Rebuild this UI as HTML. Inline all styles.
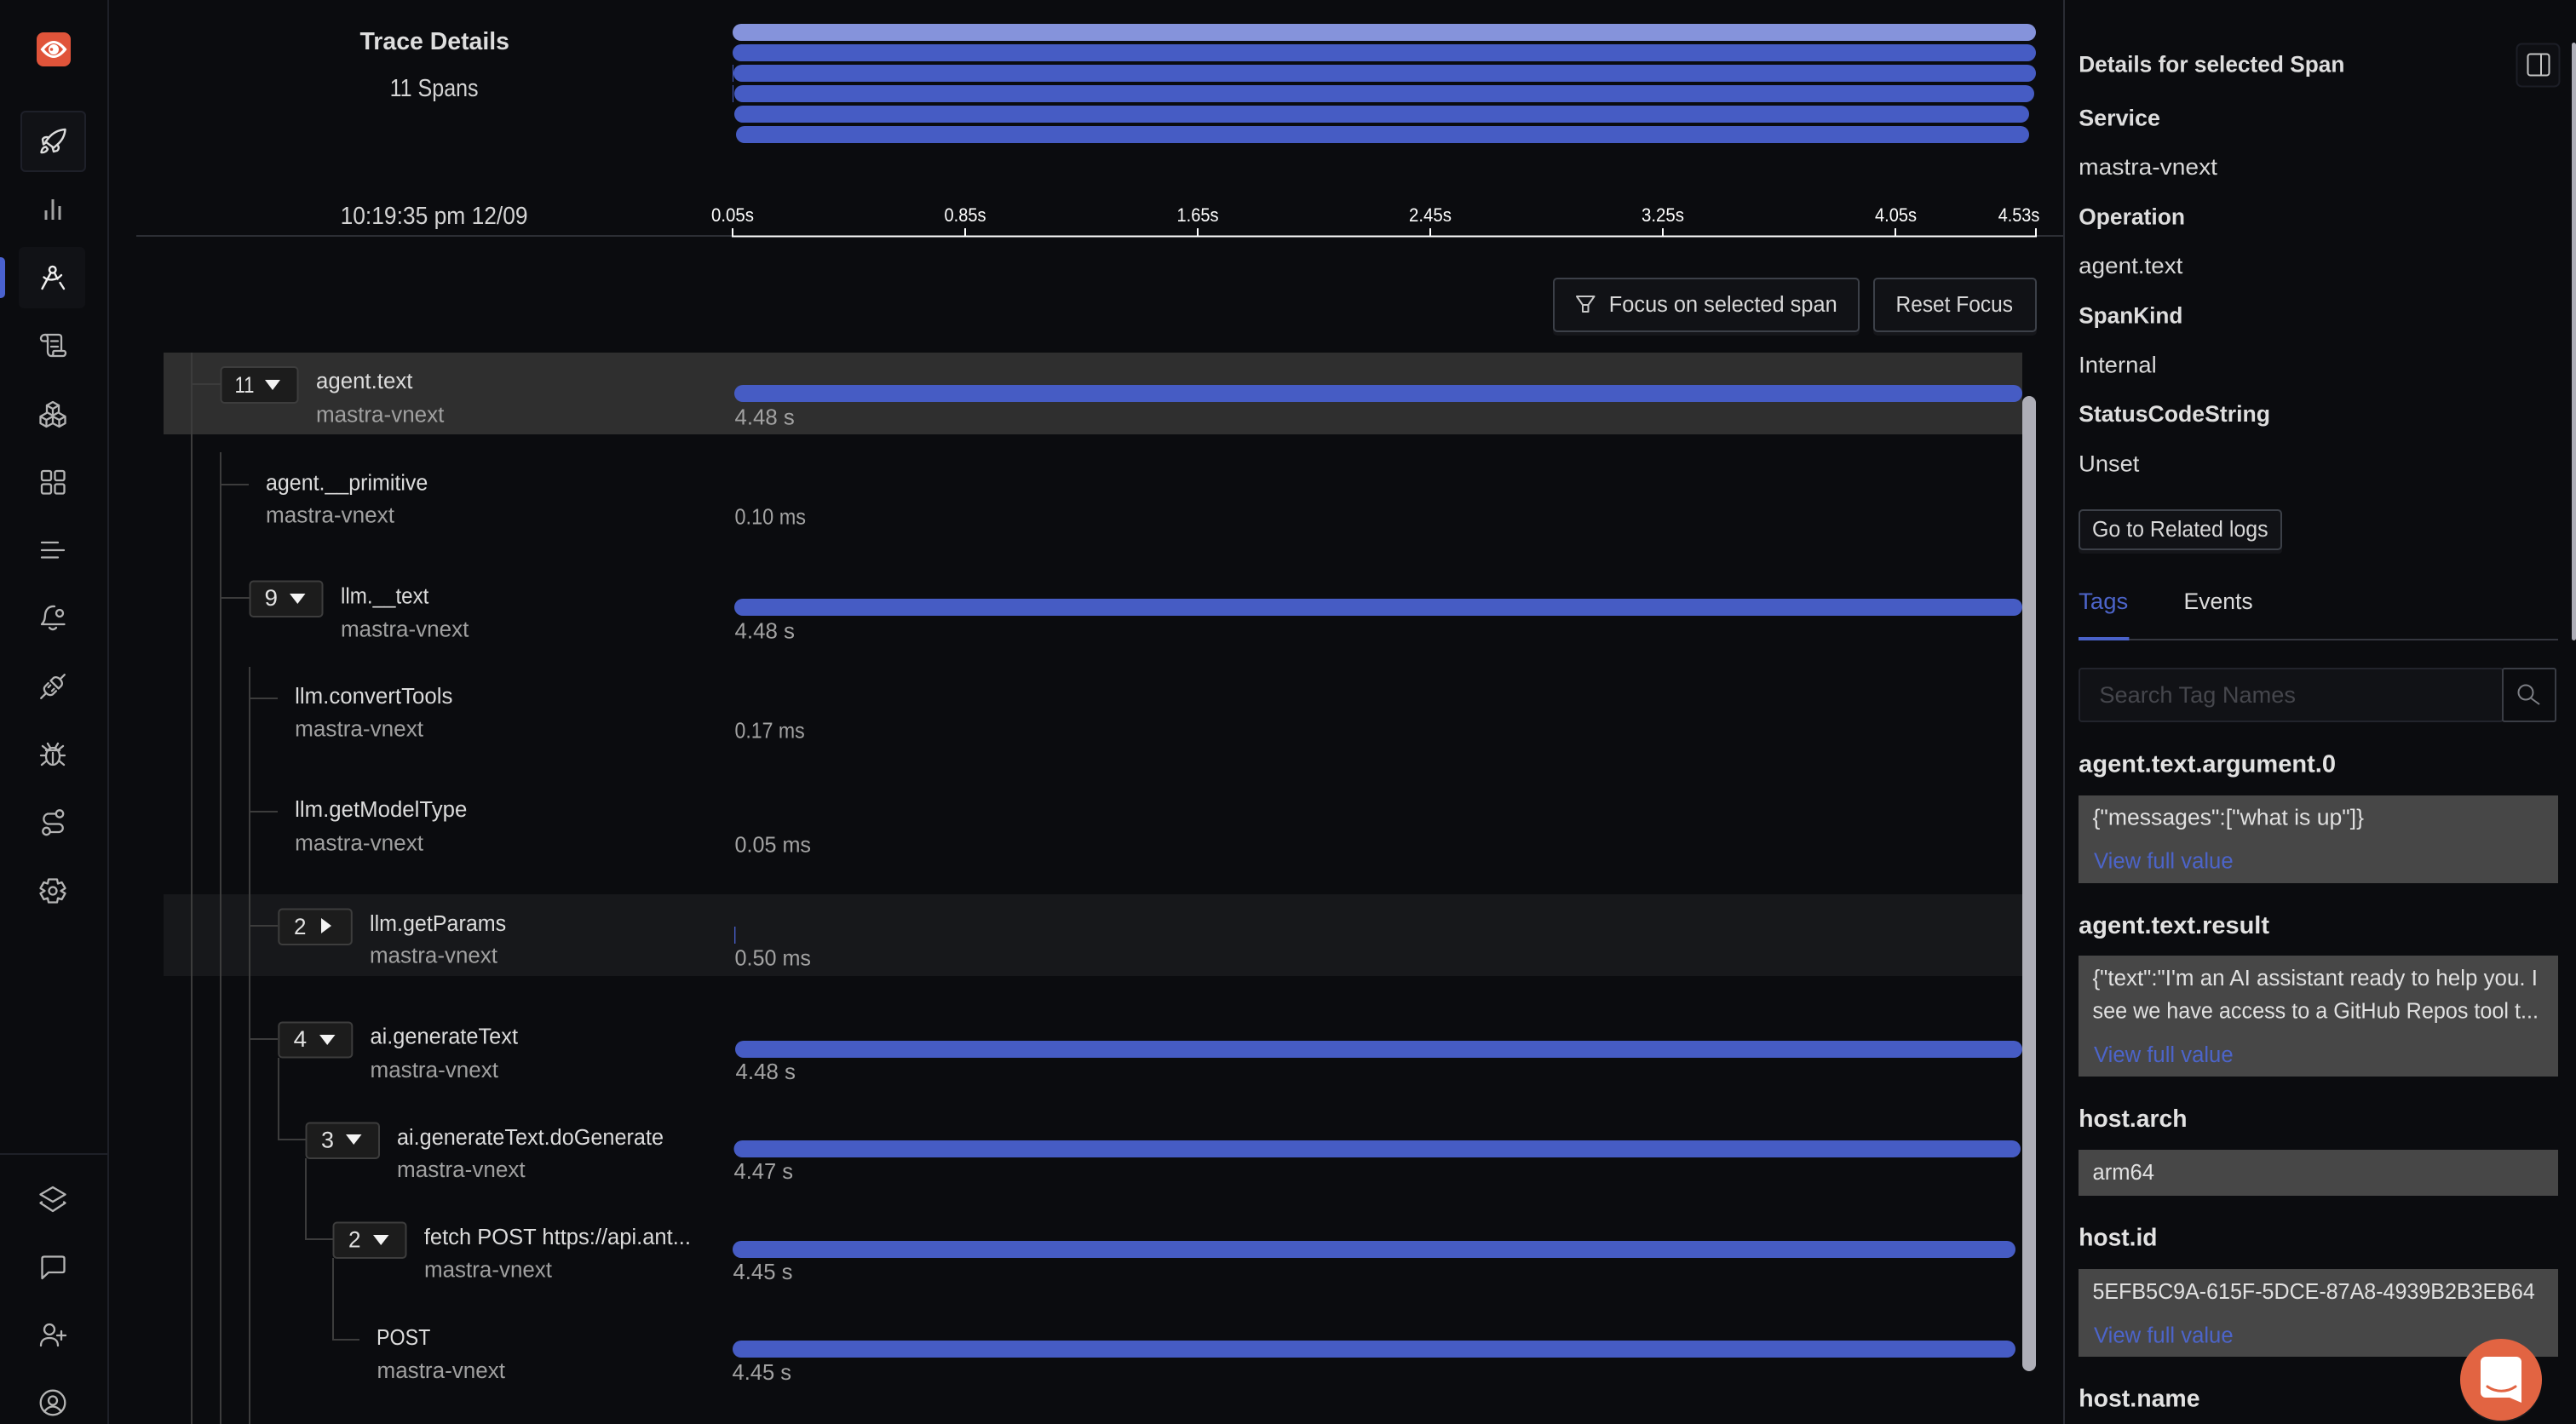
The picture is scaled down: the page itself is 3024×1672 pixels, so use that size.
<!DOCTYPE html>
<html lang="en">
<head>
<meta charset="utf-8">
<title>Trace Details</title>
<style>
html,body{margin:0;padding:0;background:#0b0c0f;width:3024px;height:1672px;overflow:hidden}
svg{display:block}
text{font-family:"Liberation Sans",Arial,sans-serif;white-space:pre}
.t{font-size:29px;font-weight:700;fill:#dedede}
.s{font-size:28.5px;fill:#d4d4d4}
.a{font-size:22px;fill:#fff}
.b{font-size:25.5px;fill:#d8d8d8}
.n{font-size:25.5px;fill:#dcdcdc}
.m{font-size:25.5px;fill:#a0a0a0}
.d{font-size:26px;fill:#a2a2a2}
.c{font-size:27px;fill:#e2e2e2}
.h{font-size:27px;font-weight:700;fill:#dedede}
.v{font-size:27px;fill:#d8d8d8}
.k{font-size:28.5px;font-weight:700;fill:#e2e2e2}
.w{font-size:25.5px;fill:#e0e0e0}
.l{font-size:25.5px;fill:#4c64c9}
.i{fill:none;stroke:#b4b4b4;stroke-width:2.3;stroke-linecap:round;stroke-linejoin:round}
.iw{fill:none;stroke:#f0f0f0;stroke-width:2.4;stroke-linecap:round;stroke-linejoin:round}
.tl{fill:#3c3c3c}
.tg{fill:#1c1c1c;stroke:#3d3d3d;stroke-width:2}
.bar{fill:#465cc4}
</style>
</head>
<body>
<svg xmlns="http://www.w3.org/2000/svg" width="3024" height="1672" viewBox="0 0 3024 1672">
<rect width="3024" height="1672" fill="#0b0c0f"/>

<!-- left rail -->
<rect x="126" y="0" width="2" height="1672" fill="#1e2028"/>
<rect x="0" y="1354" width="126" height="2" fill="#1e2028"/>
<rect x="43" y="38" width="40" height="40" rx="8" fill="#e0543a"/>
<path d="M47.5 58C53 51 58 48 63 48C68 48 73 51 78.5 58C73 65 68 68 63 68C58 68 53 65 47.5 58Z" fill="#fff"/>
<path d="M52 58C56 53 60 51 63 51C66 51 70 53 74 58C70 63 66 65 63 65C60 65 56 63 52 58Z" fill="#e0543a"/>
<circle cx="63" cy="58" r="6" fill="#fff"/>
<circle cx="60.5" cy="58" r="1.8" fill="#e0543a"/>

<rect x="25" y="131" width="75" height="70" rx="5" fill="#111216" stroke="#1e2029" stroke-width="2"/>
<rect x="22" y="290" width="78" height="72" rx="6" fill="#111216"/>
<path d="M0 302H1A5 5 0 0 1 6 307V345A5 5 0 0 1 1 350H0Z" fill="#4a62cf"/>

<g class="iw" transform="translate(30 140)" style="stroke:#dcdcdc">
<path d="M46.5 12C38.5 12.5 32 16 27 22L23.5 26.5L33 33.5L37 30C43 25 46 19 46.5 12Z"/>
<path d="M27 21.5C24.5 20.5 21.5 21 20 23.5L21 29.5L24.5 27"/>
<path d="M37 30C39.5 32 39.5 35 37 37L33 38L31.5 32.5"/>
<path d="M24 32.5C21 32.5 19 35 18.5 39C22 39.5 25 37.5 26 35Z"/>
</g>
<path d="M54 247V258M62 234V258M70 242V258" fill="none" stroke="#a2a2a2" stroke-width="3"/>
<g class="iw">
<circle cx="61.7" cy="316.7" r="3.8"/>
<path d="M59.5 320.5L49.5 339"/>
<path d="M64 320.5L67.5 327.5M70.5 332L75 339"/>
<path d="M51.5 325.5C56 329.5 66 330 72 323"/>
</g>
<g class="i">
<path d="M53 393H69C71 393 72 394.5 72 396V411.5"/>
<path d="M53 393C50 393 48 395 48 397.5C48 399.5 49.5 400.5 51 400.5H56"/>
<path d="M53 393C55.5 393 56 395 56 398V413C56 416 58 418 60 418H74C76 418 77 416 77 414.5C77 413 76 412 75 412H64C62.5 412 62 413.5 62.5 415C62.5 416.5 61.5 418 60 418"/>
<path d="M60 400.5H68M60 407H68"/>

<path d="M62 472L69 476V484L62 488L55 484V476Z"/>
<path d="M55 476L62 480L69 476M62 480V488"/>
<path d="M54.5 485L47.5 489V497L54.5 501L62 497V489M47.5 489L54.5 493L62 489M54.5 493V501"/>
<path d="M69.5 485L76.5 489V497L69.5 501L62 497M76.5 489L69.5 493L62 489M69.5 493V501"/>

<rect x="49" y="553" width="11" height="11" rx="2"/>
<rect x="64.5" y="553" width="11" height="11" rx="2"/>
<rect x="49" y="568.5" width="11" height="11" rx="2"/>
<rect x="64.5" y="568.5" width="11" height="11" rx="2"/>

<path d="M49 637H68M49 646H75M49 654.5H68"/>

<circle cx="70" cy="720" r="4"/>
<path d="M64 712C57 711.5 53.5 716 53 722C52.7 727 52 730 49 733H75.5M58 737Q62 741 66 737"/>

<g transform="translate(62 806) rotate(-45)">
<path d="M3 -6.5H7C10.5 -6.5 12 -3 12 0C12 3 10.5 6.5 7 6.5H3Z"/>
<path d="M12 0H19.5"/>
<path d="M-1 -6.5H-6C-9.5 -6.5 -11 -3 -11 0C-11 3 -9.5 6.5 -6 6.5H-1"/>
<path d="M-11 0H-19.5M-1 -3H-4.5M-1 3H-4.5"/>
</g>

<ellipse cx="62" cy="888" rx="8" ry="10"/>
<path d="M62 884V896M54 881H70M56 873L59 878M68 873L65 878M48 887H54M70 887H76M49 898L55 893M75 898L69 893M50 876L55 880M74 876L69 880"/>

<circle cx="70" cy="955.5" r="4.2"/>
<circle cx="54.5" cy="976" r="4.2"/>
<path d="M66 955.5H56A6.2 6.2 0 0 0 56 967.5H69A4.4 4.4 0 0 1 69 977H59"/>

<polygon transform="translate(62 1046)" points="-5,-13.5 5,-13.5 6,-8.5 10.5,-10 14.5,-3 9.5,0 14.5,3 10.5,10 6,8.5 5,13.5 -5,13.5 -6,8.5 -10.5,10 -14.5,3 -9.5,0 -14.5,-3 -10.5,-10 -6,-8.5"/>
<circle cx="62" cy="1046" r="4.5"/>

<path d="M62 1394L76.5 1402.5L62 1411L47.5 1402.5Z"/>
<path d="M49 1411.5L47.5 1412.5L62 1422L76.5 1412.5L75 1411.5"/>

<path d="M49.5 1501V1477.5C49.5 1476 50.5 1475.5 52 1475.5H73C74.5 1475.5 75.5 1476 75.5 1477.5V1492C75.5 1493.5 74.5 1494 73 1494H57Z"/>

<circle cx="58" cy="1561" r="6"/>
<path d="M48 1580C48 1574 52 1571 58 1571C64 1571 68 1574 68 1580M67 1568H77M72 1563V1573"/>

<circle cx="62" cy="1647" r="14.3"/>
<circle cx="62" cy="1644.5" r="5"/>
<path d="M52 1657.5C55 1653.5 58 1651.5 62 1651.5C66 1651.5 69 1653.5 72 1657.5"/>
</g>

<!-- header -->
<text class="t" x="422.5" y="58" textLength="175.5" lengthAdjust="spacingAndGlyphs">Trace Details</text>
<text class="s" x="457.6" y="113" textLength="104" lengthAdjust="spacingAndGlyphs">11 Spans</text>
<text class="s" x="399.6" y="263" textLength="220" lengthAdjust="spacingAndGlyphs">10:19:35 pm 12/09</text>

<rect x="860" y="28" width="1530" height="20" rx="10" fill="#8593db"/>
<rect x="860" y="52" width="1530" height="20" rx="10" class="bar"/>
<rect x="861" y="76" width="1529" height="20" rx="10" class="bar"/>
<rect x="862" y="100" width="1526" height="20" rx="10" class="bar"/>
<rect x="862" y="124" width="1520" height="20" rx="10" class="bar"/>
<rect x="864" y="148" width="1518" height="20" rx="10" class="bar"/>
<rect x="860" y="76" width="1" height="20" class="bar"/>
<rect x="860" y="100" width="1" height="20" class="bar"/>

<rect x="160" y="276" width="700" height="2" fill="#2c2e34"/>
<rect x="2390" y="276" width="32" height="2" fill="#2c2e34"/>
<rect x="2422" y="0" width="2" height="1672" fill="#2a2c34"/>
<rect x="859" y="276.5" width="1532" height="2" fill="#fff"/>
<path d="M860 268V278M1133 268V278M1406 268V278M1679 268V278M1952 268V278M2225 268V278M2390 268V278" stroke="#fff" stroke-width="2" fill="none"/>
<text class="a" x="835" y="260" textLength="50" lengthAdjust="spacingAndGlyphs">0.05s</text>
<text class="a" x="1108.5" y="260" textLength="49" lengthAdjust="spacingAndGlyphs">0.85s</text>
<text class="a" x="1381.5" y="260" textLength="49" lengthAdjust="spacingAndGlyphs">1.65s</text>
<text class="a" x="1654" y="260" textLength="50" lengthAdjust="spacingAndGlyphs">2.45s</text>
<text class="a" x="1927" y="260" textLength="50" lengthAdjust="spacingAndGlyphs">3.25s</text>
<text class="a" x="2201" y="260" textLength="49" lengthAdjust="spacingAndGlyphs">4.05s</text>
<text class="a" x="2345.7" y="260" textLength="48.6" lengthAdjust="spacingAndGlyphs">4.53s</text>

<!-- buttons -->
<rect x="1823" y="330" width="360" height="64" rx="5" fill="#15161a"/>
<rect x="2199" y="330" width="192" height="64" rx="5" fill="#15161a"/>
<rect x="1824" y="327" width="358" height="62" rx="4" fill="#111216" stroke="#3c4048" stroke-width="2"/>
<rect x="2200" y="327" width="190" height="62" rx="4" fill="#111216" stroke="#3c4048" stroke-width="2"/>
<path d="M1851 348H1871.5L1864.5 358V366H1858V358ZM1858 358H1864.5" fill="none" stroke="#c8c8c8" stroke-width="2" stroke-linejoin="round"/>
<text class="b" x="1888.8" y="366" textLength="267.9" lengthAdjust="spacingAndGlyphs">Focus on selected span</text>
<text class="b" x="2225.5" y="366" textLength="137.5" lengthAdjust="spacingAndGlyphs">Reset Focus</text>

<!-- rows backgrounds -->
<rect x="192" y="414" width="2182" height="96" fill="#2f2f2f"/>
<rect x="192" y="1050" width="2182" height="96" fill="#17181b"/>
<rect x="2374" y="465" width="16" height="1145" rx="8" fill="#aeaeb7"/>

<!-- tree lines -->
<rect class="tl" x="224" y="414" width="2" height="1258"/>
<rect class="tl" x="225" y="450" width="34" height="2"/>
<rect class="tl" x="258" y="531" width="2" height="1141"/>
<rect class="tl" x="259" y="568" width="33" height="2"/>
<rect class="tl" x="259" y="701" width="34" height="2"/>
<rect class="tl" x="292" y="783" width="2" height="889"/>
<rect class="tl" x="293" y="819" width="33" height="2"/>
<rect class="tl" x="293" y="952" width="33" height="2"/>
<rect class="tl" x="293" y="1086" width="33" height="2"/>
<rect class="tl" x="293" y="1219" width="33" height="2"/>
<rect class="tl" x="326" y="1242" width="2" height="97"/>
<rect class="tl" x="326" y="1337" width="33" height="2"/>
<rect class="tl" x="358" y="1360" width="2" height="96"/>
<rect class="tl" x="358" y="1454" width="33" height="2"/>
<rect class="tl" x="390" y="1477" width="2" height="97"/>
<rect class="tl" x="390" y="1572" width="32" height="2"/>

<!-- toggles -->
<rect class="tg" x="259.5" y="431" width="90" height="42" rx="4"/>
<text class="c" x="275.5" y="461" textLength="23" lengthAdjust="spacingAndGlyphs">11</text>
<path d="M311 446H329L320 458Z" fill="#f4f4f4"/>

<rect class="tg" x="293.5" y="682.5" width="85" height="41.5" rx="4"/>
<text class="c" x="310.5" y="711" textLength="15.5" lengthAdjust="spacingAndGlyphs">9</text>
<path d="M340 697H358.5L349.3 709Z" fill="#f4f4f4"/>

<rect class="tg" x="327.3" y="1067.5" width="85.5" height="41.5" rx="4"/>
<text class="c" x="345" y="1097" textLength="14.5" lengthAdjust="spacingAndGlyphs">2</text>
<path d="M377 1078V1096L389 1087Z" fill="#f4f4f4"/>

<rect class="tg" x="327.3" y="1200.5" width="86" height="41" rx="4"/>
<text class="c" x="344.7" y="1229" textLength="15.5" lengthAdjust="spacingAndGlyphs">4</text>
<path d="M375 1215H393.5L384.2 1227Z" fill="#f4f4f4"/>

<rect class="tg" x="359.5" y="1318.5" width="85.5" height="41.5" rx="4"/>
<text class="c" x="377" y="1347.5" textLength="15" lengthAdjust="spacingAndGlyphs">3</text>
<path d="M406 1332H424.5L415.2 1344Z" fill="#f4f4f4"/>

<rect class="tg" x="391.5" y="1435.5" width="85" height="41.5" rx="4"/>
<text class="c" x="409" y="1464.5" textLength="14.5" lengthAdjust="spacingAndGlyphs">2</text>
<path d="M438 1450H456.5L447.2 1462Z" fill="#f4f4f4"/>

<!-- names -->
<text class="n" x="371" y="456" textLength="113.4" lengthAdjust="spacingAndGlyphs">agent.text</text>
<text class="m" x="371" y="495.7" textLength="150.4" lengthAdjust="spacingAndGlyphs">mastra-vnext</text>
<text class="n" x="312" y="575.5" textLength="190.3" lengthAdjust="spacingAndGlyphs">agent.__primitive</text>
<text class="m" x="312" y="613.4" textLength="151" lengthAdjust="spacingAndGlyphs">mastra-vnext</text>
<text class="n" x="400" y="708.3" textLength="103.4" lengthAdjust="spacingAndGlyphs">llm.__text</text>
<text class="m" x="400" y="747.7" textLength="150.3" lengthAdjust="spacingAndGlyphs">mastra-vnext</text>
<text class="n" x="346.2" y="826" textLength="185.2" lengthAdjust="spacingAndGlyphs">llm.convertTools</text>
<text class="m" x="346.2" y="864.4" textLength="150.8" lengthAdjust="spacingAndGlyphs">mastra-vnext</text>
<text class="n" x="346.2" y="959" textLength="202.1" lengthAdjust="spacingAndGlyphs">llm.getModelType</text>
<text class="m" x="346.2" y="998.4" textLength="150.8" lengthAdjust="spacingAndGlyphs">mastra-vnext</text>
<text class="n" x="434" y="1093" textLength="160.2" lengthAdjust="spacingAndGlyphs">llm.getParams</text>
<text class="m" x="434" y="1130.6" textLength="150" lengthAdjust="spacingAndGlyphs">mastra-vnext</text>
<text class="n" x="434.5" y="1225.6" textLength="173.5" lengthAdjust="spacingAndGlyphs">ai.generateText</text>
<text class="m" x="434.5" y="1265" textLength="150.5" lengthAdjust="spacingAndGlyphs">mastra-vnext</text>
<text class="n" x="466" y="1344" textLength="313" lengthAdjust="spacingAndGlyphs">ai.generateText.doGenerate</text>
<text class="m" x="466" y="1382" textLength="150.6" lengthAdjust="spacingAndGlyphs">mastra-vnext</text>
<text class="n" x="497.8" y="1461" textLength="313.2" lengthAdjust="spacingAndGlyphs">fetch POST https://api.ant...</text>
<text class="m" x="498" y="1499.6" textLength="150" lengthAdjust="spacingAndGlyphs">mastra-vnext</text>
<text class="n" x="442" y="1578.8" textLength="63.4" lengthAdjust="spacingAndGlyphs">POST</text>
<text class="m" x="442.5" y="1618" textLength="150.5" lengthAdjust="spacingAndGlyphs">mastra-vnext</text>

<!-- bars + durations -->
<rect class="bar" x="862" y="452" width="1512" height="20" rx="10"/>
<text class="d" x="862.5" y="498.3" textLength="70.2" lengthAdjust="spacingAndGlyphs">4.48 s</text>
<text class="d" x="862.5" y="615.7" textLength="83.5" lengthAdjust="spacingAndGlyphs">0.10 ms</text>
<rect class="bar" x="862" y="703" width="1512" height="20" rx="10"/>
<text class="d" x="862.5" y="749.6" textLength="70.5" lengthAdjust="spacingAndGlyphs">4.48 s</text>
<text class="d" x="862.5" y="866.3" textLength="82.2" lengthAdjust="spacingAndGlyphs">0.17 ms</text>
<text class="d" x="862.5" y="1000.3" textLength="89.5" lengthAdjust="spacingAndGlyphs">0.05 ms</text>
<rect class="bar" x="862" y="1088" width="1.4" height="20"/>
<text class="d" x="862.5" y="1133.4" textLength="89.5" lengthAdjust="spacingAndGlyphs">0.50 ms</text>
<rect class="bar" x="863" y="1222" width="1511" height="20" rx="10"/>
<text class="d" x="863.5" y="1267" textLength="70.5" lengthAdjust="spacingAndGlyphs">4.48 s</text>
<rect class="bar" x="861.5" y="1339" width="1510.5" height="20" rx="10"/>
<text class="d" x="861.5" y="1384" textLength="69.5" lengthAdjust="spacingAndGlyphs">4.47 s</text>
<rect class="bar" x="860" y="1457" width="1506" height="20" rx="10"/>
<text class="d" x="860.5" y="1502" textLength="70" lengthAdjust="spacingAndGlyphs">4.45 s</text>
<rect class="bar" x="860" y="1574" width="1506" height="20" rx="10"/>
<text class="d" x="859.5" y="1620" textLength="69.5" lengthAdjust="spacingAndGlyphs">4.45 s</text>

<!-- right panel -->
<text class="h" x="2440.2" y="84.3" textLength="312.2" lengthAdjust="spacingAndGlyphs">Details for selected Span</text>
<rect x="2954.5" y="51.5" width="50" height="50" rx="6" fill="#0e0f13" stroke="#1c1e26" stroke-width="2"/>
<rect x="2967.5" y="63.5" width="25" height="25" rx="3" fill="none" stroke="#c4c4c4" stroke-width="2"/>
<path d="M2983 64V88" stroke="#c4c4c4" stroke-width="2"/>
<rect x="3019" y="50" width="5" height="702" rx="2.5" fill="#aeaeb7"/>

<text class="h" x="2440.2" y="147.3" textLength="95.8" lengthAdjust="spacingAndGlyphs">Service</text>
<text class="v" x="2440.2" y="205" textLength="162.8" lengthAdjust="spacingAndGlyphs">mastra-vnext</text>
<text class="h" x="2440.2" y="263.3" textLength="124.8" lengthAdjust="spacingAndGlyphs">Operation</text>
<text class="v" x="2440.2" y="321" textLength="122.2" lengthAdjust="spacingAndGlyphs">agent.text</text>
<text class="h" x="2440.2" y="379.3" textLength="122.2" lengthAdjust="spacingAndGlyphs">SpanKind</text>
<text class="v" x="2440.2" y="437.3" textLength="91.5" lengthAdjust="spacingAndGlyphs">Internal</text>
<text class="h" x="2440.2" y="495" textLength="224.8" lengthAdjust="spacingAndGlyphs">StatusCodeString</text>
<text class="v" x="2440.2" y="553.7" textLength="71.2" lengthAdjust="spacingAndGlyphs">Unset</text>

<rect x="2440" y="602" width="239" height="48" rx="4" fill="#15161a"/>
<rect x="2441" y="599" width="237" height="46" rx="4" fill="#111216" stroke="#3c4048" stroke-width="2"/>
<text class="b" x="2456" y="629.8" textLength="206.6" lengthAdjust="spacingAndGlyphs">Go to Related logs</text>

<text class="v" x="2440.2" y="715" textLength="58.1" lengthAdjust="spacingAndGlyphs" style="fill:#4c64c9">Tags</text>
<text class="v" x="2563.5" y="715" textLength="81.2" lengthAdjust="spacingAndGlyphs" style="fill:#dcdcdc">Events</text>
<rect x="2440" y="750" width="563" height="2" fill="#35373f"/>
<rect x="2440" y="748" width="59.4" height="4" fill="#4a62c9"/>

<rect x="2441" y="785" width="497" height="62" rx="3" fill="#111216" stroke="#22242c" stroke-width="2"/>
<rect x="2938" y="785" width="62" height="62" rx="2" fill="#0b0c0f" stroke="#3a3d45" stroke-width="2"/>
<text class="v" x="2464.4" y="825" textLength="230.6" lengthAdjust="spacingAndGlyphs" style="fill:#45464c">Search Tag Names</text>
<circle cx="2965" cy="813" r="8.5" fill="none" stroke="#7d7f85" stroke-width="2"/>
<path d="M2971.5 820L2981 827" stroke="#7d7f85" stroke-width="2" fill="none"/>

<text class="k" x="2440.2" y="906.6" textLength="301.8" lengthAdjust="spacingAndGlyphs">agent.text.argument.0</text>
<rect x="2440" y="934" width="563" height="103" fill="#474747"/>
<text class="w" x="2456.5" y="968.5" textLength="318.5" lengthAdjust="spacingAndGlyphs">{"messages":["what is up"]}</text>
<text class="l" x="2458" y="1019.4" textLength="163.6" lengthAdjust="spacingAndGlyphs">View full value</text>

<text class="k" x="2440.2" y="1096" textLength="223.8" lengthAdjust="spacingAndGlyphs">agent.text.result</text>
<rect x="2440" y="1122" width="563" height="142" fill="#474747"/>
<text class="w" x="2456.5" y="1157" textLength="522.5" lengthAdjust="spacingAndGlyphs">{"text":"I'm an AI assistant ready to help you. I</text>
<text class="w" x="2456.5" y="1195.7" textLength="523.5" lengthAdjust="spacingAndGlyphs">see we have access to a GitHub Repos tool t...</text>
<text class="l" x="2458" y="1247" textLength="163.6" lengthAdjust="spacingAndGlyphs">View full value</text>

<text class="k" x="2440.2" y="1323" textLength="127.3" lengthAdjust="spacingAndGlyphs">host.arch</text>
<rect x="2440" y="1350" width="563" height="54" fill="#474747"/>
<text class="w" x="2456.5" y="1385" textLength="72.5" lengthAdjust="spacingAndGlyphs">arm64</text>

<text class="k" x="2440.2" y="1462.6" textLength="92.3" lengthAdjust="spacingAndGlyphs">host.id</text>
<rect x="2440" y="1490" width="563" height="103" fill="#474747"/>
<text class="w" x="2456.5" y="1525" textLength="519.3" lengthAdjust="spacingAndGlyphs">5EFB5C9A-615F-5DCE-87A8-4939B2B3EB64</text>
<text class="l" x="2458" y="1576.7" textLength="163.6" lengthAdjust="spacingAndGlyphs">View full value</text>

<text class="k" x="2440.2" y="1651.7" textLength="142.4" lengthAdjust="spacingAndGlyphs">host.name</text>

<!-- chat launcher -->
<circle cx="2936" cy="1622" r="48" fill="#1a1b1e"/>
<circle cx="2936" cy="1620" r="48" fill="#e26442"/>
<path d="M2918 1593H2954A6 6 0 0 1 2960 1599V1647L2946 1641H2918A6 6 0 0 1 2912 1635V1599A6 6 0 0 1 2918 1593Z" fill="#fff"/>
<path d="M2920 1628C2930 1635 2943 1635 2953 1628" fill="none" stroke="#e26442" stroke-width="3" stroke-linecap="round"/>
</svg>
</body>
</html>
